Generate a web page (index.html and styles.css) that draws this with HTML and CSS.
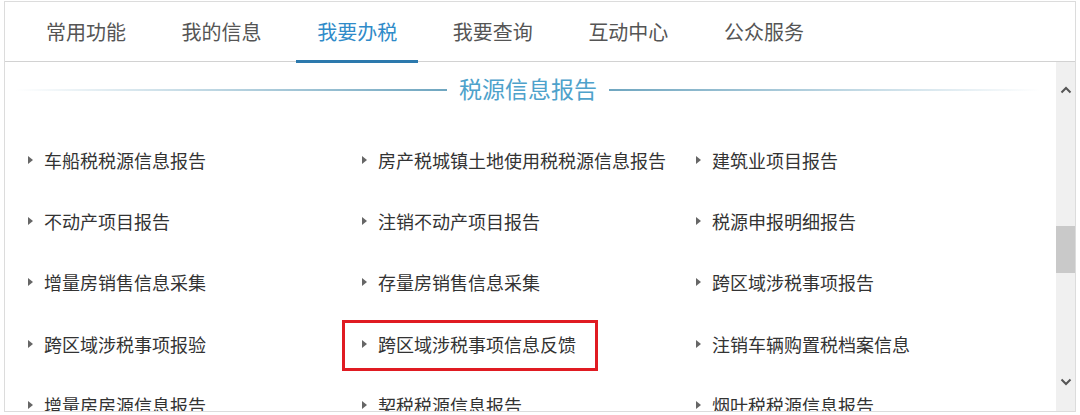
FILE: index.html
```html
<!DOCTYPE html>
<html lang="zh-CN">
<head>
  <meta charset="UTF-8">
  <title>我要办税 - 税源信息报告</title>
  <link rel="stylesheet" href="styles.css">
</head>
<body>

<div class="panel">
  <ul class="tabs">
    <li class="tab">常用功能</li>
    <li class="tab">我的信息</li>
    <li class="tab tab--active">我要办税</li>
    <li class="tab">我要查询</li>
    <li class="tab">互动中心</li>
    <li class="tab">公众服务</li>
  </ul>

  <div class="panel__body">
    <div class="content">
      <div class="heading">
        <span class="heading__line heading__line--left"></span>
        <span class="heading__text">税源信息报告</span>
        <span class="heading__line heading__line--right"></span>
      </div>

      <ul class="list">
        <li class="item">车船税税源信息报告</li>
        <li class="item">房产税城镇土地使用税税源信息报告</li>
        <li class="item">建筑业项目报告</li>
        <li class="item">不动产项目报告</li>
        <li class="item">注销不动产项目报告</li>
        <li class="item">税源申报明细报告</li>
        <li class="item">增量房销售信息采集</li>
        <li class="item">存量房销售信息采集</li>
        <li class="item">跨区域涉税事项报告</li>
        <li class="item">跨区域涉税事项报验</li>
        <li class="item item--marked">跨区域涉税事项信息反馈</li>
        <li class="item">注销车辆购置税档案信息</li>
        <li class="item">增量房房源信息报告</li>
        <li class="item">契税税源信息报告</li>
        <li class="item">烟叶税税源信息报告</li>
      </ul>
    </div>

    <!-- fake scrollbar -->
    <div class="scrollbar">
      <svg class="scrollbar__arrow scrollbar__arrow--up" width="12" height="8" viewBox="0 0 12 8">
        <path d="M1.5 6.5 L6 2 L10.5 6.5" fill="none" stroke="#555" stroke-width="2"/>
      </svg>
      <div class="scrollbar__track">
        <div class="scrollbar__thumb"></div>
      </div>
      <svg class="scrollbar__arrow scrollbar__arrow--down" width="12" height="8" viewBox="0 0 12 8">
        <path d="M1.5 1.5 L6 6 L10.5 1.5" fill="none" stroke="#555" stroke-width="2"/>
      </svg>
    </div>
  </div>
</div>

</body>
</html>
```

FILE: styles.css
```css
body {
  margin: 0;
  background-color: #fff;
  font-family: "Noto Sans CJK SC", "Liberation Sans", sans-serif;
}
ul {
  list-style: none;
  margin: 0;
  padding: 0;
}
.panel {
  margin: 1px 4px 0;
  border: 1px solid #dcdcdc;
  background-color: #fff;
}
.tabs {
  display: flex;
  height: 59px;
  padding-left: 20px;
  border-bottom: 1px solid #d2d2d2;
}
.tab {
  position: relative;
  padding: 0 21px;
  margin-right: 13.6px;
  line-height: 60px;
  font-size: 20px;
  color: #555;
}
.tab--active {
  color: #2f8bc9;
}
.tab--active::after {
  content: "";
  position: absolute;
  left: 0;
  right: 0;
  bottom: -2px;
  height: 3px;
  background-color: #2c79ad;
}
.panel__body {
  display: flex;
  height: 349px;
}
.content {
  flex: 1;
  overflow: hidden;
  padding: 0 14px 0 5px;
}
.heading {
  display: flex;
  align-items: center;
  height: 56px;
}
.heading__line {
  flex: 1;
  height: 2px;
}
.heading__line--left {
  margin-left: 5px;
  background: linear-gradient(to right, rgba(120, 170, 195, 0), #6fa6c0);
}
.heading__line--right {
  background: linear-gradient(to right, #6fa6c0, rgba(120, 170, 195, 0));
}
.heading__text {
  padding: 0 12px 4px;
  font-size: 23px;
  color: #4ea2cb;
}
.list {
  display: grid;
  grid-template-columns: 334px 334px 334px;
  grid-auto-rows: 61.4px;
  margin-top: 11px;
}
.item {
  position: relative;
  display: flex;
  align-items: center;
  padding-left: 18px;
  font-size: 18px;
  color: #333;
}
.item::before {
  content: "";
  width: 0;
  height: 0;
  margin-right: 11px;
  border-top: 4px solid transparent;
  border-bottom: 4px solid transparent;
  border-left: 5px solid #666;
}
.item--marked::after {
  content: "";
  position: absolute;
  left: -2px;
  top: 7px;
  width: 250px;
  height: 45px;
  border: 3px solid #e01b22;
}
.scrollbar {
  display: flex;
  flex-direction: column;
  align-items: center;
  width: 19px;
  margin-left: 1px;
  background-color: #f0f0f0;
}
.scrollbar__arrow--up {
  margin: 24px 0 20px;
}
.scrollbar__arrow--down {
  margin: 20px 0 25px;
}
.scrollbar__track {
  flex: 1;
  align-self: stretch;
  padding-top: 112px;
}
.scrollbar__thumb {
  height: 47px;
  background-color: #c9c9c9;
}
```
